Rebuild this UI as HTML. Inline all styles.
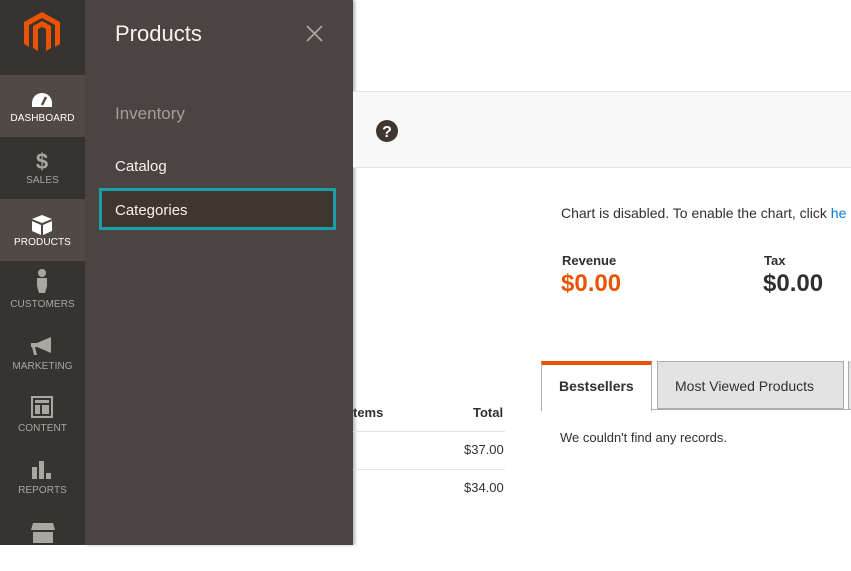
<!DOCTYPE html>
<html><head><meta charset="utf-8"><style>
*{margin:0;padding:0;box-sizing:border-box}
body{width:851px;height:545px;overflow:hidden;background:#fff;font-family:"Liberation Sans",sans-serif;position:relative;color:#303030}
.side{position:absolute;left:0;top:0;width:85px;height:545px;background:#373330}
.item{position:absolute;left:0;width:85px;height:62px;text-align:center;color:#aaa6a0;font-size:10px;letter-spacing:.1px}
.item.act{background:#514943;color:#fff}
.item svg{position:absolute;left:31px;top:16px}
.item span{position:absolute;left:0;right:0;top:38px}
.panel{position:absolute;left:85px;top:0;width:268px;height:545px;background:#4a4542;box-shadow:2px 0 3px rgba(0,0,0,.3)}
.a{position:absolute;color:#f7f3eb}
.band{position:absolute;left:353px;top:91px;width:498px;height:77px;background:#f8f8f8;border-top:1px solid #e3e3e3;border-bottom:1px solid #e3e3e3}
</style></head><body>
<div class="side">
<svg style="position:absolute;left:24px;top:12px" width="36" height="40" viewBox="0 0 36 40"><path d="M18 0L36 10V32L31 35V13L18 6L5 13V35L0 32V10Z M18 9L27 14V36L22 39V17L18 15L14 17V39L9 36V14Z" fill="#eb5202"/></svg>
<div class="item act" style="top:75px"><svg width="22" height="18" viewBox="0 0 22 18"><path d="M11 2A10 10 0 0 0 1 12v4h20v-4A10 10 0 0 0 11 2z" fill="#fff"/><path d="M11 14L15 6" stroke="#514943" stroke-width="2.5"/></svg><span>DASHBOARD</span></div>
<div class="item" style="top:137px"><svg width="22" height="24" viewBox="0 0 22 24" style="top:12px"><text x="11" y="20" text-anchor="middle" font-size="22" font-weight="bold" fill="#aaa6a0" font-family="Liberation Sans">$</text></svg><span>SALES</span></div>
<div class="item act" style="top:199px"><svg width="22" height="20" viewBox="0 0 22 20"><path d="M11 0L21 4L11 8L1 4Z M1 6L10 10V20L1 16Z M21 6L12 10V20L21 16Z" fill="#fff"/></svg><span>PRODUCTS</span></div>
<div class="item" style="top:261px"><svg width="22" height="24" viewBox="0 0 22 24" style="top:8px"><circle cx="11" cy="4" r="4" fill="#aaa6a0"/><path d="M6 9H16V17L14 24H8L6 17Z" fill="#aaa6a0"/></svg><span>CUSTOMERS</span></div>
<div class="item" style="top:323px"><svg width="22" height="20" viewBox="0 0 22 20" style="top:14px"><path d="M0 6H6L20 0V16L6 10H4L6 18H3L1 10H0Z" fill="#aaa6a0"/></svg><span>MARKETING</span></div>
<div class="item" style="top:385px"><svg width="22" height="22" viewBox="0 0 22 22" style="top:11px"><path d="M1 1H21V21H1Z" fill="none" stroke="#aaa6a0" stroke-width="2"/><rect x="4" y="4" width="14" height="3" fill="#aaa6a0"/><rect x="4" y="9" width="5" height="9" fill="#aaa6a0"/><rect x="11" y="9" width="7" height="9" fill="#aaa6a0"/></svg><span>CONTENT</span></div>
<div class="item" style="top:447px"><svg width="22" height="22" viewBox="0 0 22 22" style="top:12px"><rect x="1" y="8" width="5" height="12" fill="#aaa6a0"/><rect x="8" y="2" width="5" height="18" fill="#aaa6a0"/><rect x="15" y="14" width="5" height="6" fill="#aaa6a0"/></svg><span>REPORTS</span></div>
<div class="item" style="top:509px"><svg width="24" height="20" viewBox="0 0 24 20" style="top:14px"><path d="M2 0H22L24 7H0Z" fill="#aaa6a0"/><rect x="2" y="9" width="20" height="11" fill="#aaa6a0"/></svg></div>
</div>
<div class="panel">
<div class="a" style="left:30px;top:21px;font-size:22px">Products</div>
<svg style="position:absolute;left:221px;top:25px" width="17" height="17" viewBox="0 0 17 17"><path d="M1 1L16 16M16 1L1 16" stroke="#aaa6a0" stroke-width="1.8"/></svg>
<div class="a" style="left:30px;top:104px;font-size:17px;color:#a79d95">Inventory</div>
<div class="a" style="left:30px;top:158px;font-size:15px">Catalog</div>
<div style="position:absolute;left:14px;top:188px;width:237px;height:42px;background:#41362f;border:3px solid #1a9fa6"></div>
<div class="a" style="left:30px;top:202px;font-size:15px">Categories</div>
</div>
<div class="band"><svg style="position:absolute;left:23px;top:28px" width="22" height="22" viewBox="0 0 22 22"><circle cx="11" cy="11" r="11" fill="#41362f"/><text x="11" y="17" text-anchor="middle" font-size="16" font-weight="bold" fill="#fff" font-family="Liberation Sans">?</text></svg></div>
<div style="position:absolute;left:561px;top:205px;font-size:14px;white-space:nowrap">Chart is disabled. To enable the chart, click <span style="color:#007bdb">he</span></div>
<div style="position:absolute;left:562px;top:253px;font-size:13px;font-weight:bold">Revenue</div>
<div style="position:absolute;left:561px;top:270px;font-size:24px;font-weight:bold;color:#eb5202">$0.00</div>
<div style="position:absolute;left:764px;top:253px;font-size:13px;font-weight:bold">Tax</div>
<div style="position:absolute;left:763px;top:270px;font-size:24px;font-weight:bold">$0.00</div>
<div style="position:absolute;left:353px;top:405px;font-size:13px;font-weight:bold">tems</div>
<div style="position:absolute;left:473px;top:405px;font-size:13px;font-weight:bold">Total</div>
<div style="position:absolute;left:353px;top:431px;width:152px;border-top:1px solid #e3e3e3"></div>
<div style="position:absolute;left:353px;top:469px;width:152px;border-top:1px solid #e3e3e3"></div>
<div style="position:absolute;left:464px;top:442px;font-size:13px">$37.00</div>
<div style="position:absolute;left:464px;top:480px;font-size:13px">$34.00</div>
<div style="position:absolute;left:541px;top:409px;width:310px;border-top:1px solid #adadad"></div>
<div style="position:absolute;left:541px;top:361px;width:111px;height:50px;background:#fff;border:1px solid #adadad;border-top:4px solid #eb5202;border-bottom:none"></div>
<div style="position:absolute;left:559px;top:378px;font-size:14px;font-weight:bold">Bestsellers</div>
<div style="position:absolute;left:657px;top:361px;width:187px;height:48px;background:#e3e3e3;border:1px solid #adadad"></div>
<div style="position:absolute;left:675px;top:378px;font-size:14px">Most Viewed Products</div>
<div style="position:absolute;left:848px;top:361px;width:3px;height:48px;border-left:1px solid #adadad;background:#e3e3e3"></div>
<div style="position:absolute;left:560px;top:430px;font-size:13px">We couldn't find any records.</div>
</body></html>
